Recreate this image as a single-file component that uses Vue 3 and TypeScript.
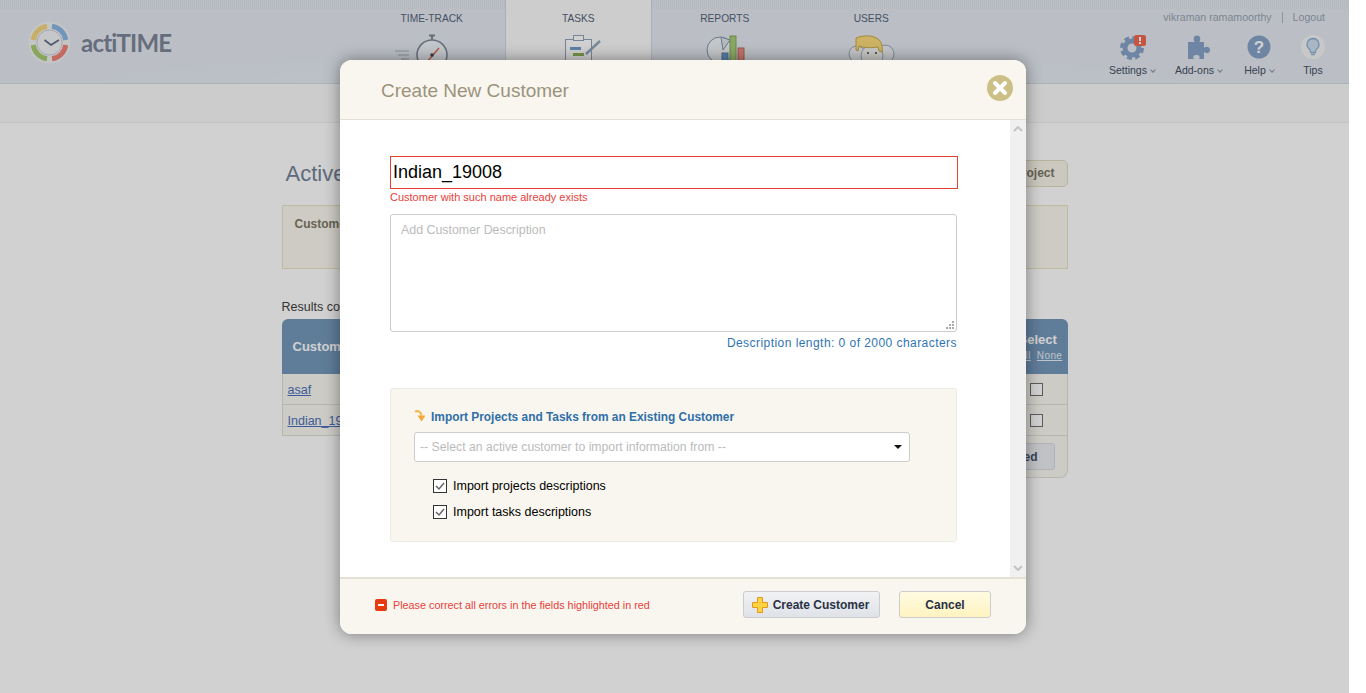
<template>
  <div class="page">
    <header class="top">
      <div class="logo">
        <svg width="43" height="43" viewBox="0 0 43 43">
          <circle cx="21.5" cy="21.5" r="21" fill="#f0f1f3" />
          <path d="M24 5.2A16.5 16.5 0 0 1 37.8 19" class="arc" stroke="#8ab6e4" />
          <path d="M37.8 24A16.5 16.5 0 0 1 24 37.8" class="arc" stroke="#ee8379" />
          <path d="M19 37.8A16.5 16.5 0 0 1 5.2 24" class="arc" stroke="#a6cc71" />
          <path d="M5.2 19A16.5 16.5 0 0 1 19 5.2" class="arc" stroke="#f3d67f" />
          <circle cx="21.5" cy="21.5" r="12.5" fill="#f2f3f6" stroke="#c9ced6" />
          <path d="M16.500 19l6.500 5 8-5" fill="none" stroke="#5f6b85" stroke-width="1.6" />
        </svg>
        <span class="logo-text">actiTIME</span>
      </div>

      <nav class="nav">
        <div class="tab">
          <span class="tab-label">TIME-TRACK</span>
          <svg class="tab-icon" width="80" height="40" viewBox="0 0 80 40">
            <path d="M3 17h14M6 21h11M9 25h8" stroke="#a4aebc" fill="none" />
            <circle cx="40" cy="21" r="15" fill="#eef2f7" stroke="#7d8796" stroke-width="1.5" />
            <path d="M37 1.500h6M40 2v4" stroke="#7d8796" stroke-width="2" fill="none" />
            <path d="M35 28l12-14" stroke="#e06a58" stroke-width="1.5" fill="none" />
            <circle cx="40" cy="21" r="1.800" fill="#444c5a" />
          </svg>
        </div>
        <div class="tab active">
          <span class="tab-label">TASKS</span>
          <svg class="tab-icon" width="80" height="40" viewBox="0 0 80 40">
            <rect x="27.500" y="5.500" width="26" height="32" fill="#fff" stroke="#8fa3ba" />
            <rect x="35.500" y="1.500" width="10" height="5" fill="#fff" stroke="#8fa3ba" />
            <rect x="32" y="13" width="11" height="3" fill="#6f9fd0" />
            <rect x="35" y="19" width="11" height="3" fill="#8db55a" />
            <rect x="38" y="26" width="11" height="3" fill="#e17f72" />
            <path d="M48 20L62 7" stroke="#8fa8c2" stroke-width="2.500" fill="none" />
          </svg>
        </div>
        <div class="tab">
          <span class="tab-label">REPORTS</span>
          <svg class="tab-icon" width="80" height="40" viewBox="0 0 80 40">
            <circle cx="35" cy="16" r="13" fill="#f0f3f6" stroke="#7f94aa" />
            <path d="M36 3l9 3-7 10z" fill="#dfe5ec" stroke="#7f94aa" />
            <rect x="37" y="19" width="6" height="14" fill="#6b9ccc" stroke="#5b7fa3" />
            <rect x="45" y="2" width="6" height="30" fill="#a7cf78" stroke="#80a35a" />
            <rect x="53" y="14" width="6" height="20" fill="#ed8d82" stroke="#b96a60" />
          </svg>
        </div>
        <div class="tab">
          <span class="tab-label">USERS</span>
          <svg class="tab-icon" width="80" height="40" viewBox="0 0 80 40">
            <circle cx="26" cy="20" r="8" fill="#eef1f4" stroke="#9ca8b6" />
            <circle cx="54" cy="20" r="9" fill="#eef1f4" stroke="#9ca8b6" />
            <circle cx="41" cy="22" r="11" fill="#f4f4f2" stroke="#a6afba" />
            <path d="M25 4c7-3 17-3 22 1 3 2 5 7 4 13l-3-1-1-4c-6 1-15 1-19-1l-1 5-2-1z" fill="#f9d978" stroke="#c9a94d" />
            <circle cx="37" cy="19" r="1" fill="#444" />
            <circle cx="45" cy="19" r="1" fill="#444" />
          </svg>
        </div>
      </nav>

      <div class="account">
        <div class="user-line">
          <span>vikraman ramamoorthy</span>
          <span class="sep" />
          <span>Logout</span>
        </div>
        <div class="tools">
          <div class="tool tool-settings">
            <svg width="32" height="26" viewBox="-3 0 32 26">
              <circle cx="13" cy="14" r="7" fill="none" stroke="#87a4c8" stroke-width="5" />
              <circle cx="13" cy="14" r="10.500" fill="none" stroke="#87a4c8" stroke-width="3" stroke-dasharray="5 3.250" />
              <rect x="15" y="1" width="12" height="11" rx="2" fill="#f06a50" />
              <rect x="20" y="3" width="2" height="4" fill="#fff" />
              <rect x="20" y="8" width="2" height="2" fill="#fff" />
            </svg>
            <span class="tool-label">Settings<i class="caret" /></span>
          </div>
          <div class="tool tool-addons">
            <svg width="24" height="26" viewBox="0 0 24 26">
              <path d="M1 8h6.500C6 5 6.500 1.500 10 1.500S14 5 12.500 8H17v6c2-2 6-1.500 6 2s-4 4-6 2v7h-5c1.500-2 .5-4-2.500-4S5.500 23 7 25H1z" fill="#87a4c8" />
            </svg>
            <span class="tool-label">Add-ons<i class="caret" /></span>
          </div>
          <div class="tool tool-help">
            <svg width="24" height="26" viewBox="0 0 24 26">
              <circle cx="12" cy="13" r="11.500" fill="#87a4c8" />
              <text x="12" y="19" text-anchor="middle" class="help-mark">?</text>
            </svg>
            <span class="tool-label">Help<i class="caret" /></span>
          </div>
          <div class="tool tool-tips">
            <svg width="24" height="26" viewBox="0 0 24 26">
              <circle cx="12" cy="13" r="12" fill="#f4f5f6" />
              <path d="M12 4.500a6 6 0 0 0-3.500 10.800c.8.700 1 1.700 1 3.200h5c0-1.500.2-2.500 1-3.200A6 6 0 0 0 12 4.500z" fill="#cfe0f1" stroke="#8db0d5" stroke-width="1.300" />
              <path d="M10 20.500h4" stroke="#8db0d5" stroke-width="1.500" />
            </svg>
            <span class="tool-label">Tips</span>
          </div>
        </div>
      </div>
    </header>

    <div class="subbar" />

    <main class="content">
      <div class="title-row">
        <h1 class="page-title">Active Customers</h1>
        <button class="add-btn">Add New Project</button>
      </div>
      <section class="filter">
        <b>Customers</b>
      </section>
      <div class="results">Results count: {{ customers.length }}</div>
      <div class="table">
        <div class="thead">
          <span class="th-name">Customers</span>
          <div class="th-select">
            <b>Select</b>
            <span class="th-links"><u>All</u><u>None</u></span>
          </div>
        </div>
        <div v-for="c in customers" :key="c" class="row">
          <a class="cust-link">{{ c }}</a>
          <span class="row-check"><i class="box" /></span>
        </div>
        <div class="tfoot">
          <button class="del-btn">Delete Selected</button>
        </div>
      </div>
    </main>

    <div class="overlay">
      <div class="modal">
        <div class="modal-head">
          <h2 class="modal-title">Create New Customer</h2>
          <svg class="close" width="26" height="26" viewBox="0 0 26 26">
            <circle cx="13" cy="13" r="13" fill="#cdc087" />
            <path d="M8 8l10 10M18 8L8 18" stroke="#fff" stroke-width="4" stroke-linecap="round" />
          </svg>
        </div>

        <div class="modal-main">
          <div class="form">
            <input class="name-input" type="text" :value="customerName" />
            <div class="field-error">Customer with such name already exists</div>
            <div class="desc">
              <span class="placeholder">Add Customer Description</span>
              <svg class="grip" width="9" height="9" viewBox="0 0 9 9">
                <path d="M7 1h2v2H7zM4 4h2v2H4zM7 4h2v2H7zM1 7h2v2H1zM4 7h2v2H4zM7 7h2v2H7z" fill="#aaa" />
              </svg>
            </div>
            <div class="desc-count">Description length: 0 of 2000 characters</div>

            <section class="import">
              <div class="import-title">
                <svg width="13" height="13" viewBox="0 0 13 13">
                  <path d="M1 1.500c3-1 6 0 6.500 4" fill="none" stroke="#f2b74a" stroke-width="2" />
                  <path d="M3.500 5.500h8l-4 6z" fill="#f2a83a" />
                </svg>
                <span>Import Projects and Tasks from an Existing Customer</span>
              </div>
              <div class="select">
                <span>-- Select an active customer to import information from --</span>
                <i class="select-arrow" />
              </div>
              <label v-for="o in importOptions" :key="o" class="check-row">
                <svg width="14" height="14" viewBox="0 0 14 14">
                  <rect x=".5" y=".5" width="13" height="13" fill="#fff" stroke="#333" />
                  <path d="M3 7l3 3 5-6" fill="none" stroke="#666" stroke-width="1.500" />
                </svg>
                <span>{{ o }}</span>
              </label>
            </section>
          </div>
          <div class="scroll-track">
            <svg width="10" height="6" viewBox="0 0 10 6"><path d="M1 5l4-4 4 4" fill="none" stroke="#c4c4c4" stroke-width="2" /></svg>
            <svg width="10" height="6" viewBox="0 0 10 6"><path d="M1 1l4 4 4-4" fill="none" stroke="#c4c4c4" stroke-width="2" /></svg>
          </div>
        </div>

        <div class="modal-foot">
          <i class="err-icon" />
          <span class="err-text">Please correct all errors in the fields highlighted in red</span>
          <button class="btn btn-create">
            <svg width="16" height="16" viewBox="0 0 16 16">
              <path d="M5.500.5h5v5h5v5h-5v5h-5v-5h-5v-5h5z" fill="#ffd23f" stroke="#e09a1c" />
            </svg>
            Create Customer
          </button>
          <button class="btn btn-cancel">Cancel</button>
        </div>
      </div>
    </div>
  </div>
</template>

<script setup lang="ts">
const customerName = 'Indian_19008'
const customers: string[] = ['asaf', 'Indian_19008']
const importOptions: string[] = ['Import projects descriptions', 'Import tasks descriptions']
</script>

<style>
html,
body {
  margin: 0;
  background: #fff;
  overflow: hidden;
}
</style>

<style scoped>
.page {
  position: relative;
  width: 1349px;
  height: 693px;
  overflow: hidden;
  background: #fff;
  font-family: "Liberation Sans", Arial, sans-serif;
  font-size: 12px;
  color: #3e3e3e;
}
.top {
  display: flex;
  box-sizing: border-box;
  height: 84px;
  border-bottom: 1px solid #d0d9e3;
  background:
    repeating-linear-gradient(90deg, rgba(90, 100, 120, 0.05) 0 1px, transparent 1px 2px) top / 100% 9px no-repeat,
    radial-gradient(ellipse 620px 34px at 640px 84px, rgba(255, 255, 255, 0.2), transparent),
    #e4eaf1;
}
.logo {
  display: flex;
  align-items: center;
  gap: 10px;
  width: 358.500px;
  box-sizing: border-box;
  padding: 1px 0 0 28px;
  height: 83px;
}
.arc {
  fill: none;
  stroke-width: 5;
}
.logo-text {
  font-family: Lato, "Noto Sans", sans-serif;
  font-size: 24px;
  font-weight: 700;
  letter-spacing: -0.8px;
  color: #7d8698;
}
.nav {
  display: flex;
}
.tab {
  display: flex;
  flex-direction: column;
  align-items: center;
  width: 146.500px;
  padding-top: 13px;
  box-sizing: border-box;
  height: 83px;
  overflow: hidden;
}
.tab.active {
  background: #fbfbfb;
  border-left: 1px solid #cdd7e2;
  border-right: 1px solid #cdd7e2;
}
.tab-label {
  font-size: 10.200px;
  line-height: 12px;
  color: #55627a;
}
.tab-icon {
  margin-top: 9px;
  flex: none;
}
.account {
  flex: 1;
  display: flex;
  flex-direction: column;
  align-items: flex-end;
  padding: 11px 24px 0 0;
}
.user-line {
  display: flex;
  align-items: center;
  gap: 10px;
  font-size: 10.600px;
  line-height: 13px;
  color: #98a3b3;
}
.sep {
  width: 1px;
  height: 11px;
  background: #aab5c4;
}
.tools {
  display: flex;
  margin-top: 10px;
  margin-right: -13px;
}
.tool {
  display: flex;
  flex-direction: column;
  align-items: center;
  gap: 4px;
}
.tool-settings {
  width: 70px;
}
.tool-addons {
  width: 63px;
}
.tool-help {
  width: 58px;
}
.tool-tips {
  width: 50px;
}
.tool-label {
  font-size: 10.500px;
  line-height: 13px;
  color: #444d62;
  white-space: nowrap;
}
.caret {
  display: inline-block;
  width: 3px;
  height: 3px;
  margin: 0 0 2px 4px;
  border-right: 1px solid #8a93a3;
  border-bottom: 1px solid #8a93a3;
  transform: rotate(45deg);
}
.help-mark {
  font-family: "Liberation Sans", sans-serif;
  font-weight: 700;
  font-size: 17px;
  fill: #fff;
}
.subbar {
  height: 38px;
  background: #f9f9f9;
  border-bottom: 1px solid #f0f0f0;
}
.content {
  width: 786px;
  margin: 0 auto;
  padding-top: 36px;
}
.title-row {
  display: flex;
  justify-content: space-between;
  align-items: center;
  height: 28px;
}
.page-title {
  margin: 2px 0 0 4px;
  font-size: 22px;
  font-weight: 400;
  color: #738398;
}
.add-btn {
  height: 27px;
  padding: 0 12px;
  border: 1px solid #e2dcc0;
  border-radius: 5px;
  background: #f8f5e9;
  font: 700 12px "Liberation Sans", sans-serif;
  color: #7d776a;
}
.filter {
  box-sizing: border-box;
  height: 64px;
  margin-top: 18px;
  padding: 11px 12px;
  border: 1px solid #eae4c2;
  background: #faf8ef;
  color: #807868;
}
.results {
  margin-top: 31px;
  font-size: 12.500px;
  line-height: 14px;
  color: #3e3e3e;
}
.table {
  margin-top: 5px;
}
.thead {
  display: flex;
  align-items: center;
  justify-content: space-between;
  height: 55px;
  padding-left: 11px;
  border-radius: 6px 6px 0 0;
  background: #7498bb;
  color: #fff;
  font-size: 13px;
  font-weight: 700;
}
.th-select {
  display: flex;
  flex-direction: column;
  align-items: flex-start;
  width: 49px;
  gap: 3px;
}
.th-links {
  display: flex;
  gap: 6px;
  font-size: 10px;
  font-weight: 400;
  letter-spacing: 0.4px;
  color: #e8f0f8;
}
.row {
  display: flex;
  align-items: center;
  justify-content: space-between;
  box-sizing: border-box;
  height: 31px;
  padding-left: 5px;
  border: 1px solid #e0e0da;
  border-top: 0;
  background: #faf8f2;
}
.cust-link {
  margin-top: 2px;
  font-size: 12.500px;
  color: #4a70bb;
  text-decoration: underline;
}
.row-check {
  display: flex;
  justify-content: center;
  align-items: center;
  width: 60px;
}
.box {
  box-sizing: border-box;
  display: block;
  width: 13px;
  height: 13px;
  border: 1px solid #707070;
  background: #fff;
}
.tfoot {
  display: flex;
  justify-content: flex-end;
  align-items: center;
  box-sizing: border-box;
  width: 300px;
  height: 42px;
  margin-left: auto;
  padding-right: 12px;
  border: 1px solid #e0e0da;
  border-top: 0;
  border-radius: 0 0 8px 8px;
  background: #faf8f2;
}
.del-btn {
  height: 27px;
  padding: 0 16px;
  border: 1px solid #d6d9df;
  border-radius: 3px;
  background: #ebedf1;
  font: 700 12px "Liberation Sans", sans-serif;
  color: #4a5368;
}
.overlay {
  position: absolute;
  inset: 0;
  background: rgba(0, 0, 0, 0.18);
}
.modal {
  position: absolute;
  left: 340px;
  top: 60px;
  display: flex;
  flex-direction: column;
  width: 686px;
  height: 574px;
  overflow: hidden;
  border-radius: 12px;
  background: #fff;
  box-shadow: 0 0 16px rgba(0, 0, 0, 0.42);
}
.modal-head {
  display: flex;
  align-items: center;
  justify-content: space-between;
  box-sizing: border-box;
  height: 60px;
  padding: 0 13px 3px 41px;
  border-bottom: 1px solid #e4e0d6;
  background: #f9f6ef;
}
.modal-title {
  margin: 6px 0 0;
  font-size: 19px;
  font-weight: 400;
  color: #9c937d;
}
.modal-main {
  display: flex;
  flex: 1;
  min-height: 0;
}
.form {
  flex: 1;
  min-width: 0;
  box-sizing: border-box;
  padding: 36px 53px 0 50px;
}
.name-input {
  display: block;
  box-sizing: border-box;
  width: 568px;
  height: 33px;
  padding: 0 2px;
  border: 1px solid #e2432c;
  outline: 0;
  font: 18px "Liberation Sans", sans-serif;
  color: #000;
}
.field-error {
  margin-top: 2px;
  font-size: 11px;
  line-height: 13px;
  color: #e8403a;
}
.desc {
  position: relative;
  box-sizing: border-box;
  height: 118px;
  margin-top: 10px;
  padding: 8px 10px;
  border: 1px solid #cccccc;
  border-radius: 3px;
  color: #bbb;
}
.placeholder {
  font-size: 12.400px;
  line-height: 14px;
}
.grip {
  position: absolute;
  right: 2px;
  bottom: 2px;
}
.desc-count {
  margin-top: 5px;
  text-align: right;
  font-size: 12px;
  line-height: 13px;
  letter-spacing: 0.45px;
  color: #2f74b2;
}
.import {
  box-sizing: border-box;
  height: 154px;
  margin-top: 38px;
  padding: 20px 46px 0 23px;
  border: 1px solid #eeeae2;
  border-radius: 3px;
  background: #f9f6ef;
}
.import-title {
  display: flex;
  align-items: center;
  gap: 4px;
  height: 15px;
  font-size: 11.900px;
  font-weight: 700;
  color: #2f6fa8;
}
.select {
  display: flex;
  align-items: center;
  justify-content: space-between;
  box-sizing: border-box;
  height: 30px;
  margin-top: 8px;
  padding: 0 7px 0 5px;
  border: 1px solid #cccccc;
  border-radius: 3px;
  background: #fff;
  font-size: 12.240px;
  color: #bbb;
}
.select-arrow {
  width: 0;
  height: 0;
  border-left: 4px solid transparent;
  border-right: 4px solid transparent;
  border-top: 4px solid #111;
}
.check-row {
  display: flex;
  align-items: center;
  gap: 6px;
  height: 26px;
  margin-left: 19px;
  font-size: 12.500px;
  color: #000;
}
.select + .check-row {
  margin-top: 11px;
}
.scroll-track {
  display: flex;
  flex-direction: column;
  justify-content: space-between;
  align-items: center;
  width: 16px;
  padding: 6px 0;
  background: #f0f0f0;
}
.modal-foot {
  display: flex;
  align-items: center;
  box-sizing: border-box;
  height: 57px;
  padding: 0 35px 4px 35px;
  border-top: 2px solid #e4e0d6;
  background: #f9f6ef;
}
.err-icon {
  position: relative;
  display: block;
  width: 12px;
  height: 12px;
  border-radius: 2px;
  background: #e63a10;
}
.err-icon::after {
  content: "";
  position: absolute;
  left: 3px;
  top: 5px;
  width: 6px;
  height: 2px;
  background: #fff;
}
.err-text {
  flex: 1;
  margin-left: 6px;
  font-size: 10.800px;
  color: #e8403a;
}
.btn {
  display: flex;
  align-items: center;
  justify-content: center;
  box-sizing: border-box;
  height: 27px;
  border: 1px solid #cccccc;
  border-radius: 3px;
  font: 700 12px "Liberation Sans", sans-serif;
  color: #2a3144;
}
.btn-create {
  gap: 5px;
  width: 137px;
  padding: 0 2px 0 0;
  background: linear-gradient(#f1f2f4, #dfe2e7);
}
.btn-cancel {
  width: 92px;
  margin-left: 19px;
  background: linear-gradient(#fffbe2, #fff3c0);
}
</style>
